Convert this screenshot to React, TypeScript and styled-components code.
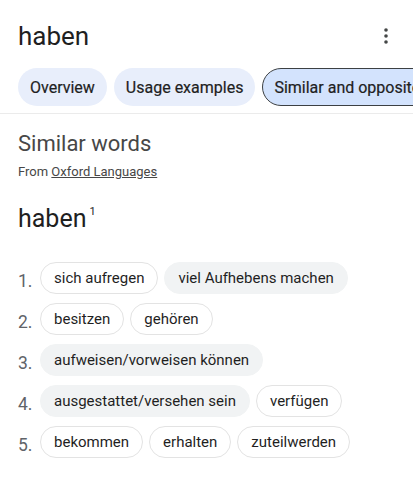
import styled, { createGlobalStyle } from 'styled-components';

const GlobalStyle = createGlobalStyle`
  html, body {
    margin: 0;
    padding: 0;
    background: #fff;
  }
  body {
    font-family: Roboto, "Noto Sans", Arial, sans-serif;
    color: #1f1f1f;
    -webkit-font-smoothing: antialiased;
  }
`;

type Sense = { n: number; words: { text: string; filled?: boolean }[] };

const senses: Sense[] = [
  { n: 1, words: [{ text: 'sich aufregen' }, { text: 'viel Aufhebens machen', filled: true }] },
  { n: 2, words: [{ text: 'besitzen' }, { text: 'gehören' }] },
  { n: 3, words: [{ text: 'aufweisen/vorweisen können', filled: true }] },
  { n: 4, words: [{ text: 'ausgestattet/versehen sein', filled: true }, { text: 'verfügen' }] },
  { n: 5, words: [{ text: 'bekommen' }, { text: 'erhalten' }, { text: 'zuteilwerden' }] },
];

const tabs = ['Overview', 'Usage examples', 'Similar and opposite words'];

const App = () => {
  return (
    <Page>
      <GlobalStyle />
      <Header>
        <TitleRow>
          <Title>haben</Title>
          <MenuButton aria-label="More options">
            <svg width="20" height="20" viewBox="0 0 20 20">
              <circle cx="10" cy="4" r="1.8" fill="#444746" />
              <circle cx="10" cy="10" r="1.8" fill="#444746" />
              <circle cx="10" cy="16" r="1.8" fill="#444746" />
            </svg>
          </MenuButton>
        </TitleRow>
        <Tabs>
          {tabs.map((t, i) => (
            <Tab key={t} $active={i === 2}>
              {t}
            </Tab>
          ))}
        </Tabs>
      </Header>
      <Section>
        <SectionTitle>Similar words</SectionTitle>
        <Source>
          From <SourceLink href="#">Oxford Languages</SourceLink>
        </Source>
        <Headword>
          haben<Sup>1</Sup>
        </Headword>
        <SenseList>
          {senses.map((s) => (
            <SenseRow key={s.n}>
              <SenseNum>{s.n}.</SenseNum>
              <Chips>
                {s.words.map((w) => (
                  <Chip key={w.text} $filled={!!w.filled}>
                    {w.text}
                  </Chip>
                ))}
              </Chips>
            </SenseRow>
          ))}
        </SenseList>
      </Section>
    </Page>
  );
};

export default App;

const Page = styled.div`
  width: 413px;
  height: 480px;
  overflow: hidden;
  background: #fff;
`;

const Header = styled.header`
  padding: 20px 0 7px 18px;
  border-bottom: 1px solid #ebebeb;
`;

const TitleRow = styled.div`
  display: flex;
  align-items: center;
  justify-content: space-between;
  padding-right: 17px;
`;

const Title = styled.h1`
  margin: 0;
  font-size: 26px;
  line-height: 32px;
  font-weight: 400;
  color: #1f1f1f;
`;

const MenuButton = styled.button`
  display: flex;
  align-items: center;
  justify-content: center;
  width: 20px;
  height: 20px;
  padding: 0;
  border: 0;
  background: none;
`;

const Tabs = styled.nav`
  display: flex;
  gap: 7px;
  margin-top: 16px;
  overflow: hidden;
  white-space: nowrap;
`;

const Tab = styled.div<{ $active: boolean }>`
  flex-shrink: 0;
  height: 38px;
  box-sizing: border-box;
  display: flex;
  align-items: center;
  padding: 0 11px;
  border-radius: 19px;
  font-size: 16px;
  font-weight: 400;
  color: #1f1f1f;
  -webkit-text-stroke: 0.2px #1f1f1f;
  background: ${(p) => (p.$active ? '#d3e3fd' : '#e8eefb')};
  border: 1px solid ${(p) => (p.$active ? '#3c4043' : 'transparent')};
`;

const Section = styled.section`
  padding: 16px 18px 0;
`;

const SectionTitle = styled.h2`
  margin: 0;
  font-size: 22px;
  line-height: 28px;
  font-weight: 400;
  color: #474747;
`;

const Source = styled.div`
  margin-top: 5px;
  font-size: 13px;
  line-height: 18px;
  color: #474747;
`;

const SourceLink = styled.a`
  color: #474747;
  text-decoration: underline;
`;

const Headword = styled.div`
  margin-top: 22px;
  font-size: 25px;
  line-height: 32px;
  color: #1f1f1f;
`;

const Sup = styled.sup`
  font-size: 11px;
  margin-left: 3px;
  vertical-align: 12px;
  line-height: 0;
  color: #1f1f1f;
`;

const SenseList = styled.ol`
  list-style: none;
  margin: 27px 0 0;
  padding: 0;
  display: flex;
  flex-direction: column;
  gap: 9px;
`;

const SenseRow = styled.li`
  display: flex;
  align-items: center;
`;

const SenseNum = styled.span`
  width: 22px;
  flex-shrink: 0;
  font-size: 17.5px;
  padding-top: 6px;
  color: #5f6368;
`;

const Chips = styled.div`
  display: flex;
  gap: 6px;
`;

const Chip = styled.span<{ $filled: boolean }>`
  height: 32px;
  box-sizing: border-box;
  display: flex;
  align-items: center;
  padding: 0 13px;
  border-radius: 16px;
  font-size: 15px;
  color: #1f1f1f;
  white-space: nowrap;
  background: ${(p) => (p.$filled ? '#f1f3f4' : '#fff')};
  border: 1px solid ${(p) => (p.$filled ? '#f1f3f4' : '#e3e3e3')};
`;
